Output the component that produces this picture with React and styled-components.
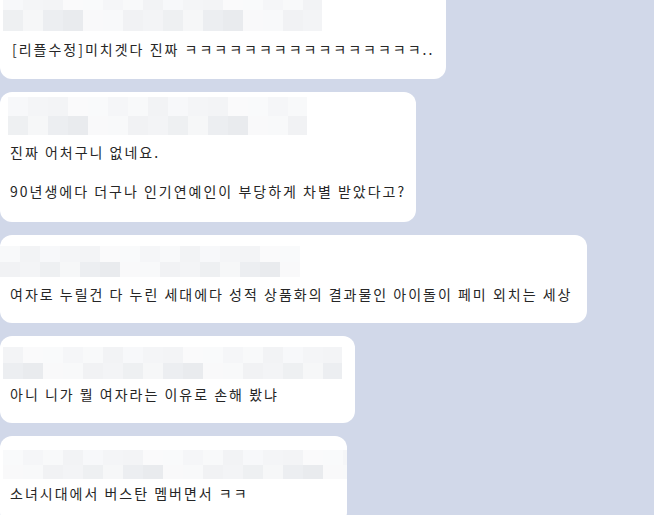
import React from "react";
import styled, { createGlobalStyle } from "styled-components";

const GlobalStyle = createGlobalStyle`
  html, body {
    margin: 0;
    padding: 0;
    background: #d1d8e9;
    overflow: hidden;
  }
  body {
    font-family: "Noto Sans CJK KR", "Noto Sans", sans-serif;
  }
`;

const Viewport = styled.div`
  width: 654px;
  height: 515px;
  overflow: hidden;
  background: #d1d8e9;
`;

const List = styled.div`
  display: flex;
  flex-direction: column;
  align-items: flex-start;
  gap: 13px;
  margin-top: -12px;
`;

const Bubble = styled.div`
  width: ${(p) => p.$w}px;
  box-sizing: border-box;
  background: #ffffff;
  border-radius: 12px;
  padding: ${(p) => p.$pt}px 0 ${(p) => p.$pb}px 0;
  display: flex;
  flex-direction: column;
`;

const Mosaic = styled.div`
  display: flex;
  flex-direction: column;
  width: ${(p) => p.$w}px;
  height: ${(p) => p.$h}px;
  margin-left: ${(p) => p.$x}px;
  margin-bottom: ${(p) => p.$mb}px;
  overflow: hidden;
`;

const MosaicRow = styled.div`
  display: flex;
  flex: 1;
`;

const Cell = styled.div`
  flex: 0 0 20px;
  background: ${(p) => p.$c};
`;

const Text = styled.div`
  padding-left: ${(p) => p.$x}px;
  font-size: 14px;
  line-height: 19.5px;
  letter-spacing: 2px;
  color: #262626;
  white-space: pre;
`;

const topShades = ["#f7f8fa", "#f4f5f7", "#f8f9fa", "#f2f3f5", "#f9fafb", "#f5f6f8", "#f3f4f6", "#fafafb"];
const bottomShades = ["#f6f7f8", "#eceef1", "#f3f4f6", "#eef0f2", "#f8f9fa", "#f1f2f4", "#e9ebee", "#f9f9fa"];

function shadesFor(seed, count, palette) {
  const out = [];
  let s = seed;
  for (let i = 0; i < count; i++) {
    s = (s * 9301 + 49297) % 233280;
    out.push(palette[s % palette.length]);
  }
  return out;
}

function Blur({ seed, w, h, x, mb }) {
  const n = Math.ceil(w / 20);
  const top = shadesFor(seed, n, topShades);
  const bottom = shadesFor(seed + 7, n, bottomShades);
  return (
    <Mosaic $w={w} $h={h} $x={x} $mb={mb}>
      <MosaicRow>
        {top.map((c, i) => (
          <Cell key={i} $c={c} />
        ))}
      </MosaicRow>
      <MosaicRow>
        {bottom.map((c, i) => (
          <Cell key={i} $c={c} />
        ))}
      </MosaicRow>
    </Mosaic>
  );
}

const messages = [
  { w: 446, pt: 0, pb: 19, blur: { seed: 3, w: 319, h: 43, x: 3, mb: 9 }, tx: 12, text: "[리플수정]미치겟다 진짜 ㅋㅋㅋㅋㅋㅋㅋㅋㅋㅋㅋㅋㅋㅋㅋㅋ.." },
  { w: 416, pt: 5, pb: 21, blur: { seed: 11, w: 299, h: 38, x: 8, mb: 8 }, tx: 10, text: "진짜 어처구니 없네요.\n\n90년생에다 더구나 인기연예인이 부당하게 차별 받았다고?" },
  { w: 587, pt: 11, pb: 18, blur: { seed: 5, w: 300, h: 31, x: 0, mb: 8 }, tx: 10, text: "여자로 누릴건 다 누린 세대에다 성적 상품화의 결과물인 아이돌이 페미 외치는 세상" },
  { w: 355, pt: 11, pb: 19, blur: { seed: 17, w: 339, h: 32, x: 3, mb: 6 }, tx: 10, text: "아니 니가 뭘 여자라는 이유로 손해 봤냐" },
  { w: 347, pt: 14, pb: 20, blur: { seed: 23, w: 344, h: 29, x: 3, mb: 5 }, tx: 10, text: "소녀시대에서 버스탄 멤버면서 ㅋㅋ" },
];

export default function App() {
  return (
    <>
      <GlobalStyle />
      <Viewport>
        <List>
          {messages.map((m, i) => (
            <Bubble key={i} $w={m.w} $pt={m.pt} $pb={m.pb}>
              <Blur {...m.blur} />
              <Text $x={m.tx}>{m.text}</Text>
            </Bubble>
          ))}
        </List>
      </Viewport>
    </>
  );
}
